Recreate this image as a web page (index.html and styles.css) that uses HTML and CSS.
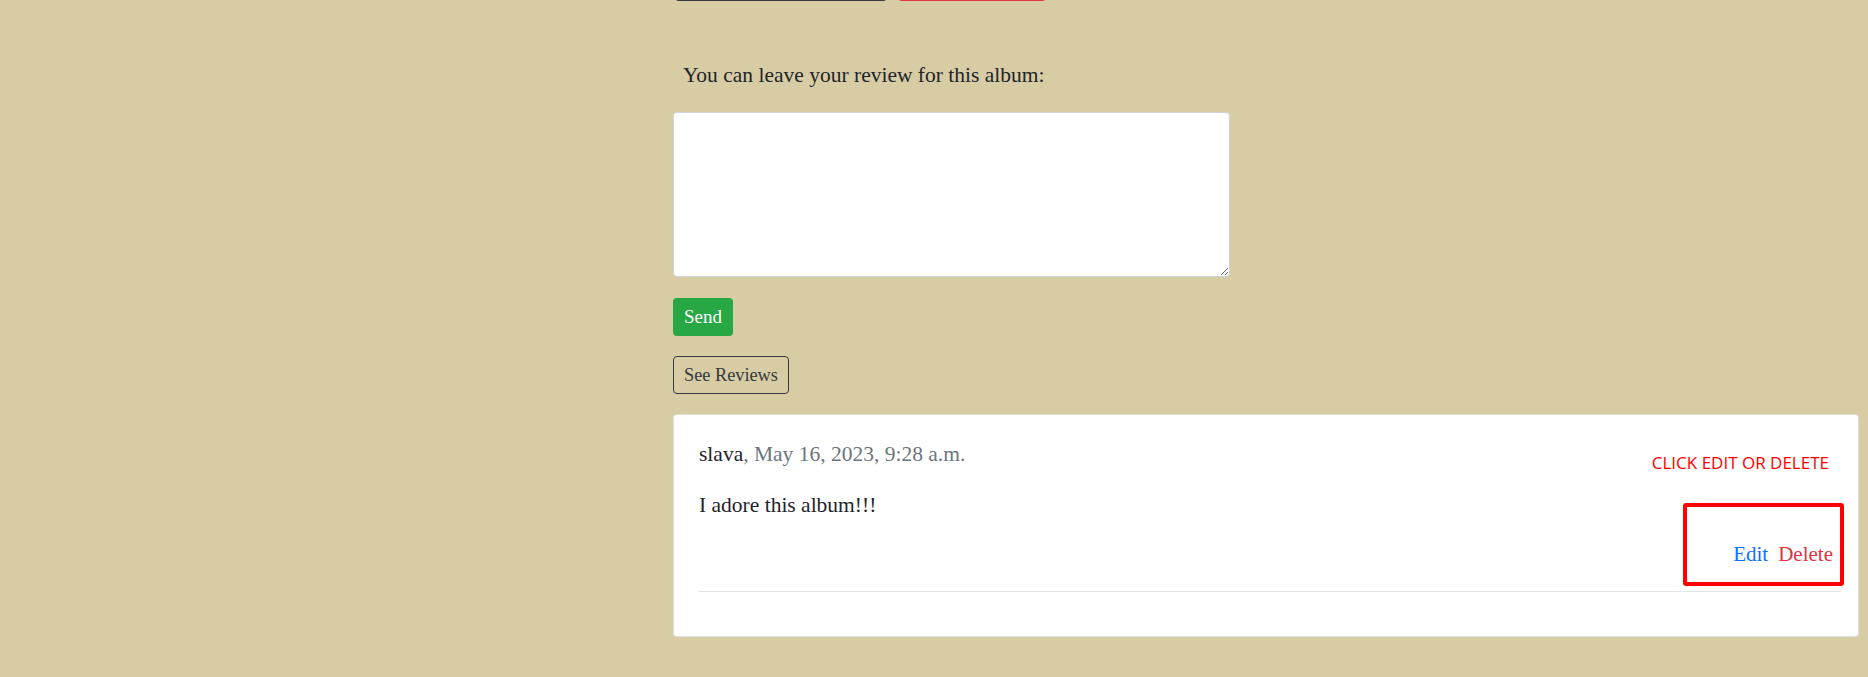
FILE: index.html
```html
<!DOCTYPE html>
<html lang="en">
<head>
<meta charset="utf-8">
<title>Album review</title>
<link rel="stylesheet" href="styles.css">
</head>
<body>
<div class="page">
  <div class="spacer"></div>
  <main class="main">
    <div class="top-actions">
      <span class="btn-top btn-top-dark" aria-label="Add to favourites"></span>
      <span class="btn-top btn-top-red" aria-label="Remove"></span>
    </div>
    <p class="lead">You can leave your review for this album:</p>
    <form class="review-form">
      <textarea class="review-input" aria-label="Review"></textarea>
      <button class="btn-send" type="button">Send</button>
    </form>
    <button class="btn-outline" type="button">See Reviews</button>
    <section class="card">
      <div class="review-meta"><span class="author">slava</span><span class="date">, May 16, 2023, 9:28 a.m.</span></div>
      <p class="review-text">I adore this album!!!</p>
      <div class="review-actions">
        <a class="link-edit" href="#">Edit</a>
        <a class="link-delete" href="#">Delete</a>
      </div>
      <hr class="divider">
      <span class="note">CLICK EDIT OR DELETE</span>
      <span class="note-box"></span>
    </section>
  </main>
</div>
</body>
</html>
```

FILE: styles.css
```css
* { box-sizing: border-box; }

html, body {
  margin: 0;
  padding: 0;
  background: #d8cca5;
  height: 100%;
}

body {
  font-family: "Liberation Serif", "Times New Roman", serif;
  color: #212529;
  overflow: hidden;
}

.page {
  display: flex;
  min-height: 100%;
}

.spacer {
  flex: 0 0 673px;
}

.main {
  flex: 1;
  padding-right: 9px;
  display: flex;
  flex-direction: column;
  align-items: flex-start;
}

.top-actions {
  display: flex;
  gap: 11px;
  padding-left: 2px;
  margin-top: -37px;
}

.btn-top {
  display: block;
  height: 38px;
  border-radius: 4px;
}

.btn-top-dark { width: 212px; background: #343a40; }
.btn-top-red { width: 148px; background: #dc3545; }

.lead {
  margin: 58px 0 0 10px;
  font-size: 21.5px;
  line-height: 32px;
}

.review-form {
  display: flex;
  flex-direction: column;
  align-items: flex-start;
}

.review-input {
  margin-top: 21px;
  width: 557px;
  height: 165px;
  border: 1px solid #ced4da;
  border-radius: 4px;
  background: #fff;
  padding: 6px 12px;
  font: 18px "Liberation Serif", serif;
}

.btn-send {
  margin-top: 21px;
  height: 38px;
  padding: 0 11px;
  border: 0;
  border-radius: 4px;
  background: #28a745;
  color: #fff;
  font: 19px "Liberation Serif", serif;
  line-height: 38px;
}

.btn-outline {
  margin-top: 20px;
  height: 38px;
  padding: 0 10px;
  border: 1px solid #343a40;
  border-radius: 4px;
  background: transparent;
  color: #343a40;
  font: 18.3px "Liberation Serif", serif;
  line-height: 36px;
}

.card {
  position: relative;
  margin-top: 20px;
  align-self: stretch;
  background: #fff;
  border: 1px solid rgba(0, 0, 0, 0.125);
  border-radius: 4px;
  padding: 0 17px 44px 25px;
}

.review-meta {
  margin-top: 25px;
  font-size: 21.5px;
  line-height: 28px;
}

.author { color: #212529; }
.date { color: #6c757d; }

.review-text {
  margin: 23px 0 0;
  font-size: 21.5px;
  line-height: 28px;
}

.review-actions {
  margin-top: 20px;
  padding-right: 8px;
  display: flex;
  justify-content: flex-end;
  gap: 10px;
  font-size: 21px;
  line-height: 30px;
}

.review-actions a { text-decoration: none; }
.link-edit { color: #0d6efd; }
.link-delete { color: #dc3545; }

.divider {
  margin: 22px 0 0;
  border: 0;
  border-top: 1px solid #e3e3e3;
}

.note {
  position: absolute;
  top: 36px;
  right: 29px;
  font-family: "Open Sans", sans-serif;
  font-size: 17px;
  line-height: 24px;
  color: #ff0000;
}

.note-box {
  position: absolute;
  top: 88px;
  right: 14px;
  width: 161px;
  height: 83px;
  border: 4px solid #ff0000;
  border-radius: 3px;
}
```
